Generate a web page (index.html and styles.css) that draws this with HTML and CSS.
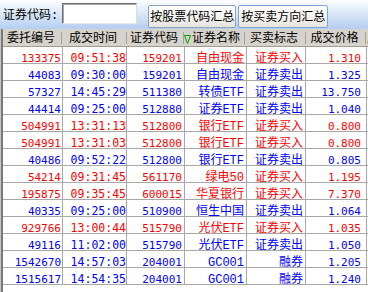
FILE: index.html
```html
<!DOCTYPE html>
<html lang="zh-CN">
<head>
    <meta charset="UTF-8">
    <title>当日成交</title>
    <link rel="stylesheet" href="styles.css">
</head>
<body>

<div class="toolbar">
    <span class="code-label">证券代码:</span>
    <input class="code-input" type="text">
    <button class="btn btn-code">按股票代码汇总</button>
    <button class="btn btn-side">按买卖方向汇总</button>
</div>

<div class="frame">
<div class="grid">
    <div class="head">
        <div class="head-cell">委托编号</div>
        <div class="head-cell">成交时间</div>
        <div class="head-cell">证券代码</div>
        <div class="head-cell sorted"><svg class="sort-mark" width="7" height="9" viewBox="0 0 7 9"><polygon points="0.5,0.5 6.5,0.5 3.5,8.5" fill="none" stroke="#00a000" stroke-width="1"/></svg>证券名称</div>
        <div class="head-cell">买卖标志</div>
        <div class="head-cell">成交价格</div>
        <div class="head-cell last">成交数量</div>
    </div>

    <div class="row buy"><div class="cell c-id">133375</div><div class="cell c-time">09:51:38</div><div class="cell c-code">159201</div><div class="cell c-name">自由现金</div><div class="cell c-side">证券买入</div><div class="cell c-price">1.310</div><div class="cell c-more"></div></div>
    <div class="row sell"><div class="cell c-id">44083</div><div class="cell c-time">09:30:00</div><div class="cell c-code">159201</div><div class="cell c-name">自由现金</div><div class="cell c-side">证券卖出</div><div class="cell c-price">1.325</div><div class="cell c-more"></div></div>
    <div class="row sell"><div class="cell c-id">57327</div><div class="cell c-time">14:45:29</div><div class="cell c-code">511380</div><div class="cell c-name">转债ETF</div><div class="cell c-side">证券卖出</div><div class="cell c-price">13.750</div><div class="cell c-more"></div></div>
    <div class="row sell"><div class="cell c-id">44414</div><div class="cell c-time">09:25:00</div><div class="cell c-code">512880</div><div class="cell c-name">证券ETF</div><div class="cell c-side">证券卖出</div><div class="cell c-price">1.040</div><div class="cell c-more"></div></div>
    <div class="row buy"><div class="cell c-id">504991</div><div class="cell c-time">13:31:13</div><div class="cell c-code">512800</div><div class="cell c-name">银行ETF</div><div class="cell c-side">证券买入</div><div class="cell c-price">0.800</div><div class="cell c-more"></div></div>
    <div class="row buy"><div class="cell c-id">504991</div><div class="cell c-time">13:31:03</div><div class="cell c-code">512800</div><div class="cell c-name">银行ETF</div><div class="cell c-side">证券买入</div><div class="cell c-price">0.800</div><div class="cell c-more"></div></div>
    <div class="row sell"><div class="cell c-id">40486</div><div class="cell c-time">09:52:22</div><div class="cell c-code">512800</div><div class="cell c-name">银行ETF</div><div class="cell c-side">证券卖出</div><div class="cell c-price">0.805</div><div class="cell c-more"></div></div>
    <div class="row buy"><div class="cell c-id">54214</div><div class="cell c-time">09:31:45</div><div class="cell c-code">561170</div><div class="cell c-name">绿电50</div><div class="cell c-side">证券买入</div><div class="cell c-price">1.195</div><div class="cell c-more"></div></div>
    <div class="row buy"><div class="cell c-id">195875</div><div class="cell c-time">09:35:45</div><div class="cell c-code">600015</div><div class="cell c-name">华夏银行</div><div class="cell c-side">证券买入</div><div class="cell c-price">7.370</div><div class="cell c-more"></div></div>
    <div class="row sell"><div class="cell c-id">40335</div><div class="cell c-time">09:25:00</div><div class="cell c-code">510900</div><div class="cell c-name">恒生中国</div><div class="cell c-side">证券卖出</div><div class="cell c-price">1.064</div><div class="cell c-more"></div></div>
    <div class="row buy"><div class="cell c-id">929766</div><div class="cell c-time">13:00:44</div><div class="cell c-code">515790</div><div class="cell c-name">光伏ETF</div><div class="cell c-side">证券买入</div><div class="cell c-price">1.035</div><div class="cell c-more"></div></div>
    <div class="row sell"><div class="cell c-id">49116</div><div class="cell c-time">11:02:00</div><div class="cell c-code">515790</div><div class="cell c-name">光伏ETF</div><div class="cell c-side">证券卖出</div><div class="cell c-price">1.050</div><div class="cell c-more"></div></div>
    <div class="row sell"><div class="cell c-id">1542670</div><div class="cell c-time">14:57:03</div><div class="cell c-code">204001</div><div class="cell c-name">GC001</div><div class="cell c-side">融券</div><div class="cell c-price">1.205</div><div class="cell c-more"></div></div>
    <div class="row sell"><div class="cell c-id">1515617</div><div class="cell c-time">14:54:35</div><div class="cell c-code">204001</div><div class="cell c-name">GC001</div><div class="cell c-side">融券</div><div class="cell c-price">1.240</div><div class="cell c-more"></div></div>
</div>
</div>

</body>
</html>
```

FILE: styles.css
```css
body {
    margin: 0;
    width: 368px;
    height: 292px;
    overflow: hidden;
    background-color: #fff;
    color: #000;
    font-family: "Liberation Mono", "Noto Sans CJK SC", monospace;
    font-size: 12px;
}
.toolbar {
    height: 29px;
    display: flex;
    align-items: flex-start;
    background: linear-gradient(#fdfeff, #e6effb 30%, #b3cef0);
}
.code-label {
    padding: 3px 0 0 3px;
    line-height: 26px;
    white-space: nowrap;
}
.code-input {
    margin: 3px 0 0 4px;
    width: 75px;
    height: 21px;
    box-sizing: border-box;
    padding: 0;
    border: 1px solid;
    border-color: #6f6f6f #dcdcdc #e8e8e8 #6f6f6f;
    box-shadow: inset 1px 1px 0 #a6a6a6;
    background-color: #fff;
    outline: none;
}
.btn {
    margin-top: 5px;
    height: 23px;
    box-sizing: border-box;
    padding: 3px 0 0;
    font: inherit;
    line-height: 18px;
    color: #000;
    white-space: nowrap;
    border: 1px solid #8fa3bd;
    border-radius: 2px;
    background: linear-gradient(#fefefd, #f2f1ec 60%, #e6e4dd);
}
.btn-code {
    margin-left: 11px;
    width: 88px;
}
.btn-side {
    margin-left: 2px;
    width: 90px;
    border-color: #7fa6dc;
}
.frame {
    border-left: 1px solid #c6c6c6;
}
.grid {
    height: 263px;
    border-left: 2px solid #7a7a7a;
    background-color: #fff;
}
.head {
    display: grid;
    grid-template-columns: 59px 65px 57px 61px 61px 60px 60px;
    height: 18px;
    box-sizing: border-box;
    border-bottom: 1px solid #a09c94;
    background-color: #d6d3cc;
}
.head-cell {
    padding: 1px 3px 0 0;
    line-height: 18px;
    text-align: center;
    white-space: nowrap;
    background: linear-gradient(#a4a09a, #a4a09a) right 0 top 3px / 1px 12px no-repeat;
}
.head-cell.sorted {
    padding-right: 5px;
}
.head-cell.last {
    padding: 1px 0 0 1px;
    text-align: left;
    background: none;
}
.sort-mark {
    vertical-align: -2px;
    margin-right: 1px;
}
.row {
    display: grid;
    grid-template-columns: 60px 64px 58px 62px 59px 61px 60px;
    height: 17px;
}
.row.buy {
    color: #f00;
}
.row.sell {
    color: #00f;
}
.cell {
    height: 17px;
    box-sizing: border-box;
    border-right: 1px solid #a8a8a8;
    border-bottom: 1px solid #a8a8a8;
    line-height: 25px;
    text-align: right;
    white-space: nowrap;
}
.c-id,
.c-time,
.c-code,
.c-price {
    font-family: "DejaVu Sans Mono", monospace;
    font-size: 11px;
    line-height: 23px;
}
.c-id {
    padding-right: 1px;
}
.c-time {
    font-size: 11.5px;
    padding-right: 0;
}
.c-code {
    padding-right: 2px;
}
.c-name,
.c-side {
    padding-right: 2px;
}
.c-price {
    padding-right: 5px;
}
.c-more {
    border-right: none;
}
```
